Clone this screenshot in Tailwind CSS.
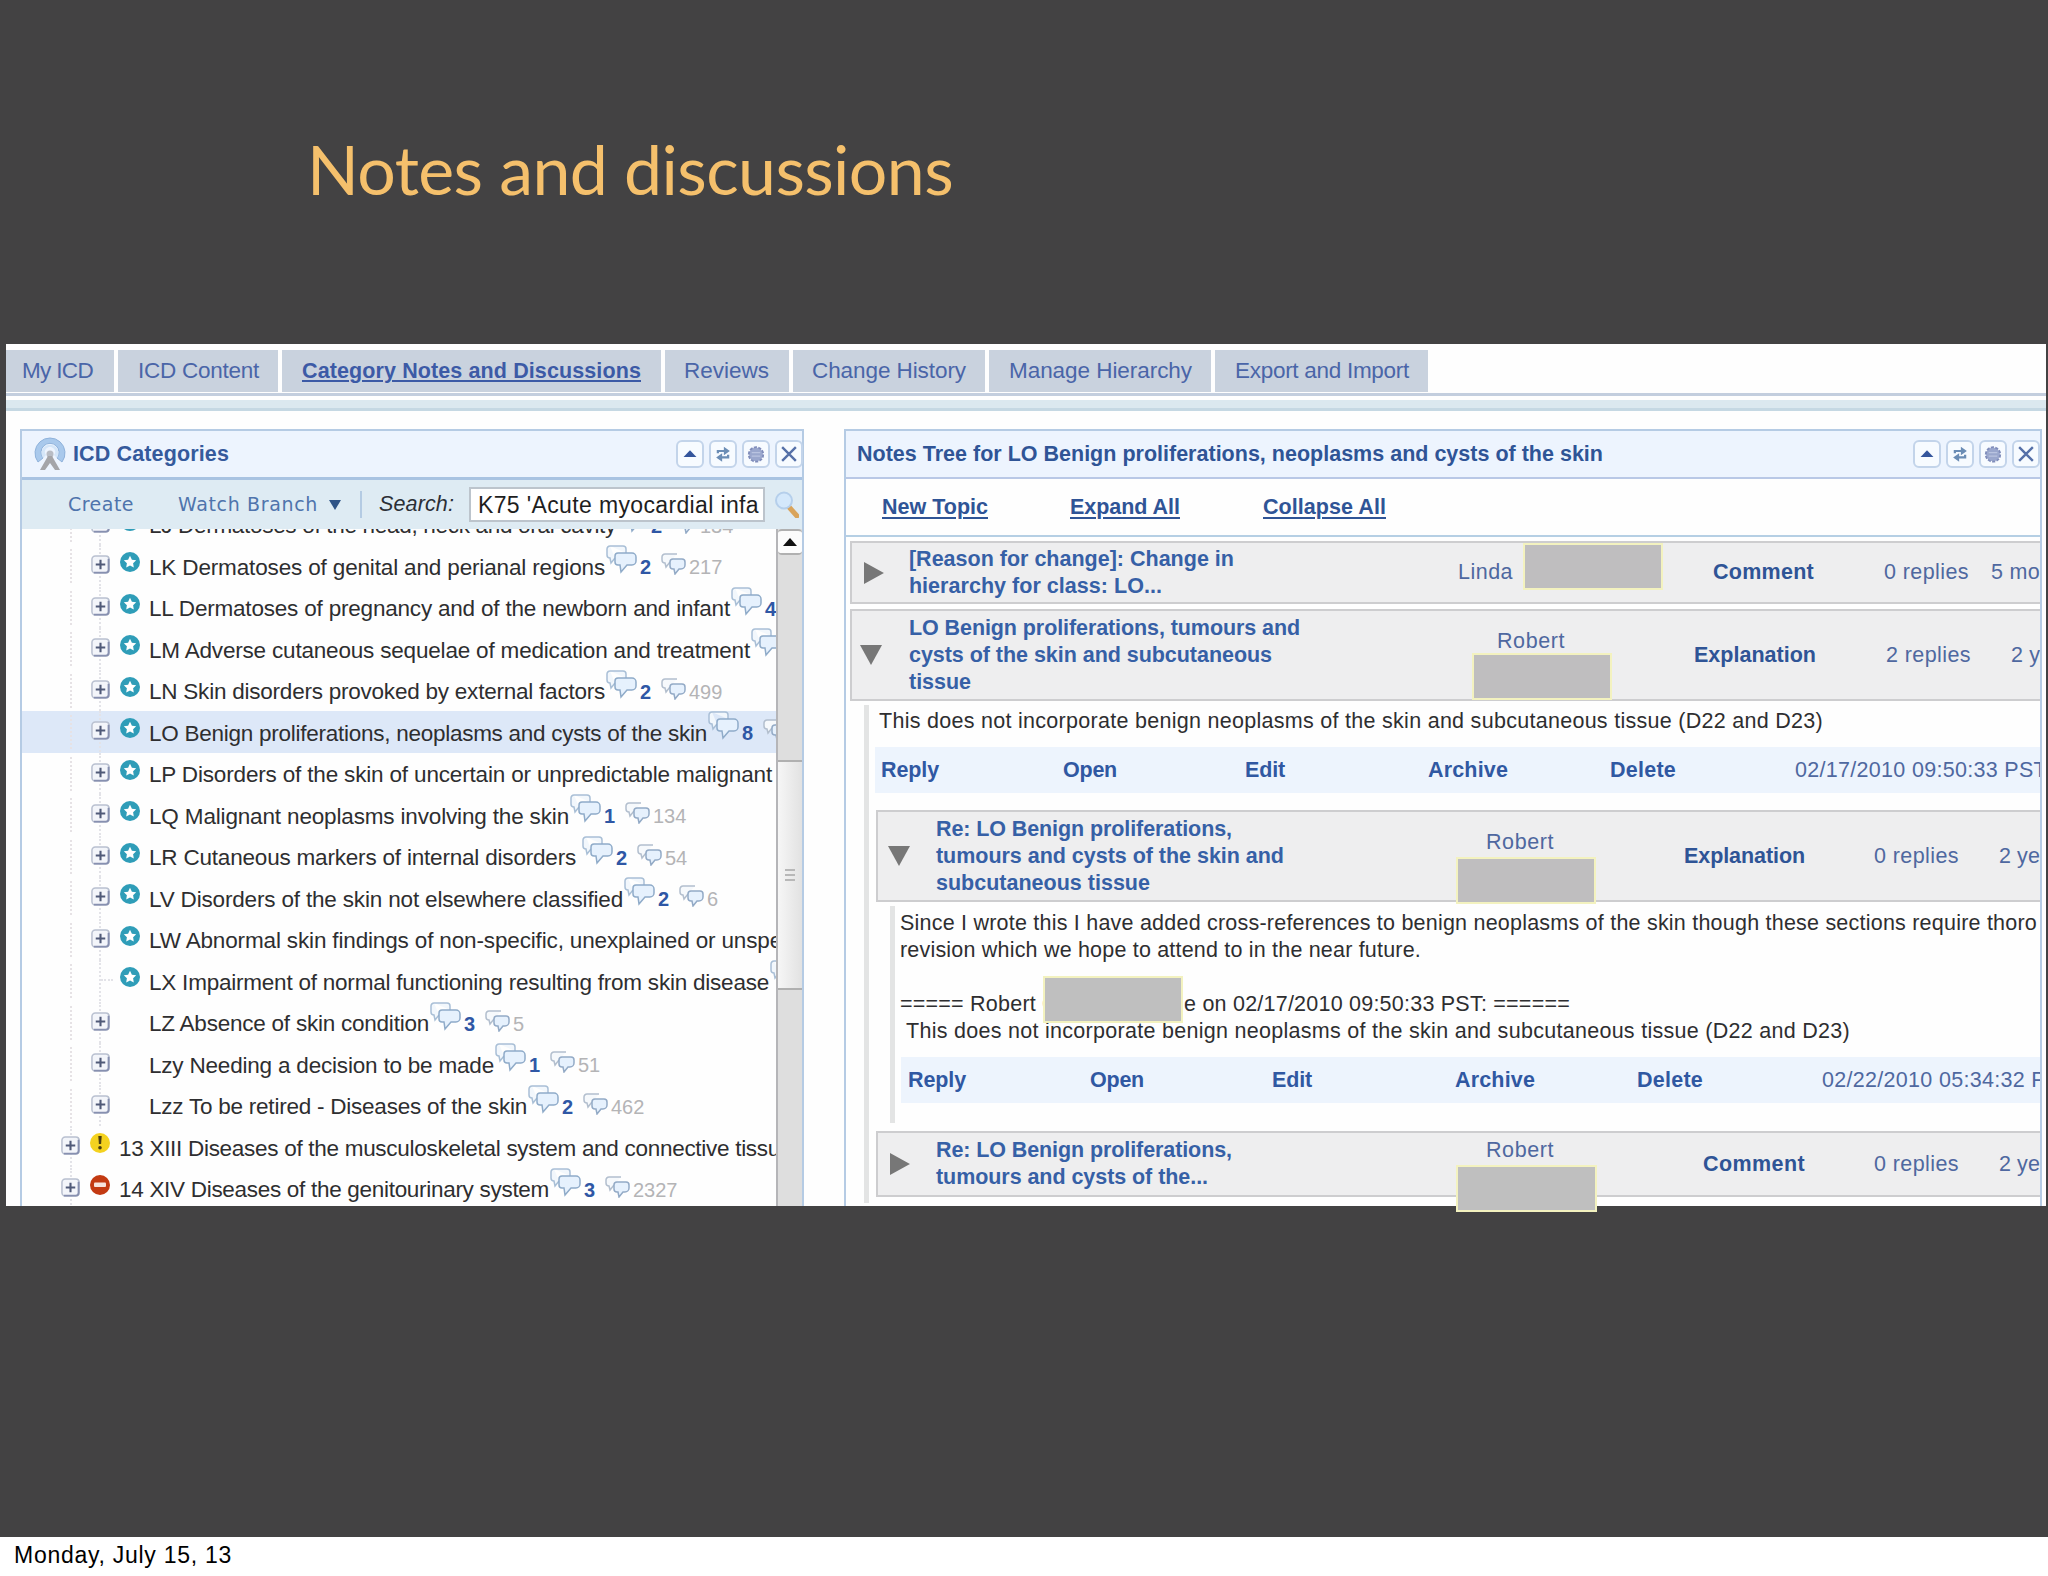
<!DOCTYPE html>
<html lang="en">
<head>
  <meta charset="UTF-8">
  <title>Notes and discussions</title>
  <script src="https://cdn.jsdelivr.net/npm/@tailwindcss/browser@4"></script>
</head>
<body class="w-[2048px] h-[1576px] overflow-hidden bg-white font-['Liberation_Sans',sans-serif]">
  <svg class="hidden">
    <symbol id="expander" viewBox="0 0 20 20">
      <rect x="1" y="1" width="18" height="18" rx="3.5" fill="#f3f5fa" stroke="#b9c0d0" stroke-width="1.6"/>
      <path d="M3 18.5h12.500a3 3 0 0 0 3-3V4" fill="none" stroke="#8790b0" stroke-width="2"/>
      <path d="M10 5v10M5 10h10" stroke="#505a78" stroke-width="2.200"/>
    </symbol>
    <symbol id="star" viewBox="0 0 20 20">
      <circle cx="10" cy="10" r="10" fill="#2f9db8"/>
      <path d="M10 3.800l1.900 3.900 4.300.6-3.100 3 .7 4.300L10 13.600l-3.800 2 .7-4.300-3.100-3 4.300-.6z" fill="#fff"/>
    </symbol>
    <symbol id="warn" viewBox="0 0 20 20">
      <circle cx="10" cy="10" r="10" fill="#f4d21f"/>
      <path d="M8.300 3h3.400l-.6 8H8.900z" fill="#4a3d10"/><circle cx="10" cy="14.700" r="1.800" fill="#4a3d10"/>
    </symbol>
    <symbol id="stop" viewBox="0 0 20 20">
      <circle cx="10" cy="10" r="10" fill="#c33a12"/><rect x="4" y="7.500" width="12" height="4.500" rx="1" fill="#f7e3dc"/>
    </symbol>
    <symbol id="bubbles" viewBox="0 0 31 29">
      <path d="M4 1h13a3 3 0 0 1 3 3v4M4 1a3 3 0 0 0-3 3v6a3 3 0 0 0 3 3l1 5 4-5" fill="#f2f7fc" stroke="#a9bfd6" stroke-width="1.500"/>
      <path d="M12 8h14a4 4 0 0 1 4 4v4a4 4 0 0 1-4 4h-5l-6 7-1-7h-2a3 3 0 0 1-3-3v-6a3 3 0 0 1 3-3z" fill="#e6f1fd" stroke="#8fabc9" stroke-width="1.500"/>
    </symbol>
    <symbol id="bubbles-sm" viewBox="0 0 25 22">
      <path d="M16 1H4a3 3 0 0 0-3 3v3a3 3 0 0 0 3 3l1 4 4-5" fill="#f6f9fc" stroke="#b3bfce" stroke-width="1.500"/>
      <path d="M12 6h9a3 3 0 0 1 3 3v3a4 4 0 0 1-4 4h-2l-4 5-1-5h-1a3 3 0 0 1-3-3V9a3 3 0 0 1 3-3z" fill="#e6f1fd" stroke="#93aac6" stroke-width="1.500"/>
    </symbol>
    <symbol id="btn-up" viewBox="0 0 28 28"><path d="M14 9.500l7.500 8h-15z" fill="#34559c"/></symbol>
    <symbol id="btn-refresh" viewBox="0 0 28 28">
      <path d="M8 13V10.500h8M20 15v3h-8" fill="none" stroke="#6b8db5" stroke-width="2.600"/>
      <path d="M15 5.500l7 5-7 5zM13 13l-7 5 7 5z" fill="#6b8db5"/>
    </symbol>
    <symbol id="btn-gear" viewBox="0 0 28 28">
      <circle cx="14" cy="14.500" r="8" fill="#a3afd2" stroke="#7f8cba" stroke-width="3" stroke-dasharray="3.500 1.500"/>
      <circle cx="14" cy="14.500" r="7.500" fill="#9aa7cd"/><path d="M9 12.500h10M9 16.500h10" stroke="#b9c3e0" stroke-width="1.500"/>
    </symbol>
    <symbol id="btn-close" viewBox="0 0 28 28"><path d="M6 6l16 16M22 6L6 22" stroke="#5570a8" stroke-width="2.800"/></symbol>
  </svg>

  <!-- slide -->
  <div class="relative h-[1537px] bg-[#434243] pl-1.5">
    <div class="h-[344px] pt-[119px] pl-[301px]">
      <h1 class="text-[68px] leading-[100px] text-[#f5c06c] font-['Lato',sans-serif]"><span data-w="646">Notes and discussions</span></h1>
    </div>

    <div class="w-[2040px] h-[862px] bg-[#fefefe] overflow-hidden pt-1.5">
      <!-- tabs -->
      <nav id="tabs" class="flex gap-1 h-[42px] text-[22.5px] text-[#4a65a8]"></nav>
      <div class="mt-[1px] h-[3px] bg-[#c3cede]"></div>
      <div class="mt-1 h-[11px] bg-[#dbe8ef] border-b-[3px] border-[#c5d8e3]"></div>

      <div class="flex mt-[18px]">
        <!-- category tree -->
        <section class="ml-3.5 w-[784px] h-[800px] border-2 border-[#b5cbe4]">
          <header class="flex items-center h-[46px] bg-[#edf4fe] pl-[11px]">
            <svg class="w-[34px] h-[34px]" viewBox="0 0 34 34">
              <path d="M5 25A15 15 0 1 1 29 25l-5-4a9 9 0 1 0-14 0z" fill="#a9c9ec" stroke="#8fb2db"/>
              <path d="M10 21a8.500 8.500 0 1 1 14 0l-3-3a5 5 0 1 0-8 0z" fill="#d5e6f8"/>
              <circle cx="17" cy="17" r="3.500" fill="#b8bcc4"/>
              <path d="M15 19h4l8 14h-5l-5-7-5 7H7z" fill="#a5a5a8"/>
            </svg>
            <h2 class="ml-[6px] pt-px text-[21.500px] font-bold text-[#355a9c]"><span data-w="156">ICD Categories</span></h2>
            <div class="panel-buttons ml-auto flex gap-[5px] -mr-px"></div>
          </header>
          <div class="flex items-center h-[52px] bg-[#deebf3] border-t-[3px] border-[#a9c3e2] text-[19px] text-[#4f74ac] font-['DejaVu_Sans',sans-serif]">
            <span class="ml-[46px]" data-w="66">Create</span>
            <span class="ml-[44px]" data-w="140">Watch Branch</span>
            <svg class="ml-[11px] w-3 h-2.5" viewBox="0 0 12 10"><path d="M0 0h12L6 10z" fill="#2f5487"/></svg>
            <div class="ml-[19px] w-0.5 h-[27px] bg-[#b4cbe3]"></div>
            <span class="ml-[17px] italic text-[21.500px] text-[#2b2f36] font-['Liberation_Sans',sans-serif]" data-w="75">Search:</span>
            <div class="ml-[15px] w-[296px] h-[35px] bg-white border-2 border-[#bcc4cc] pl-[7px] text-[23px] leading-[33px] text-[#1e1e1e] font-['Liberation_Sans',sans-serif] overflow-hidden"><span data-w="281">K75 'Acute myocardial infa</span></div>
            <svg class="ml-[10px] w-6 h-[27px]" viewBox="0 0 24 27">
              <path d="M14 16l8 9" stroke="#d9a45b" stroke-width="5" stroke-linecap="round"/>
              <circle cx="9" cy="9.500" r="8" fill="#d4e8fb" stroke="#b5cfeb" stroke-width="2"/>
            </svg>
          </div>
          <div class="flex h-[680px]">
            <div class="w-[754px] h-full overflow-hidden">
              <ul id="tree" class="-mt-[25.500px] text-[22.500px] text-[#2e2e30] leading-[41.500px]"></ul>
            </div>
            <!-- scrollbar -->
            <div class="w-[26px] border-l-2 border-[#b5b5b8] bg-[#dedede]">
              <div class="flex items-center justify-center h-[26px] bg-[#fcfcfc] border-y-2 border-[#b0b0b0] rounded-sm">
                <svg class="w-3.5 h-2" viewBox="0 0 14 8"><path d="M7 0l7 8H0z" fill="#111"/></svg>
              </div>
              <div class="h-[205px]"></div>
              <div class="flex flex-col items-center justify-center gap-[3px] h-[230px] bg-gradient-to-r from-[#f6f6f6] to-[#e2e2e2] border-y-2 border-[#b0b0b0]">
                <div class="w-2.5 h-0.5 bg-[#b8b8b8]"></div>
                <div class="w-2.5 h-0.5 bg-[#b8b8b8]"></div>
                <div class="w-2.5 h-0.5 bg-[#b8b8b8]"></div>
              </div>
            </div>
          </div>
        </section>

        <!-- notes -->
        <section class="ml-10 w-[1198px] h-[800px] border-2 border-[#b5cbe4] overflow-hidden text-[21.500px] text-[#4f68a0] leading-[27px]">
          <header class="flex items-center h-[48px] bg-[#edf4fe] border-b-2 border-[#b9c8e6] pl-[11px]">
            <h2 class="font-bold text-[#2f5496]"><span data-w="746">Notes Tree for LO Benign proliferations, neoplasms and cysts of the skin</span></h2>
            <div class="panel-buttons ml-auto flex gap-[5px]"></div>
          </header>
          <div class="flex items-center h-[58px] border-b-2 border-[#b5cfe4] pl-9 font-bold underline text-[#2f5496] decoration-2 underline-offset-[3px]">
            <span data-w="106">New Topic</span>
            <span class="ml-[82px]" data-w="110">Expand All</span>
            <span class="ml-[83px]" data-w="123">Collapse All</span>
          </div>

          <div class="pl-1 pt-[4px]">
            <div class="relative flex items-center h-[63px] bg-[#eeeeef] border-2 border-r-0 border-[#cdcdcf]">
              <svg class="ml-3 w-5 h-[22px]" viewBox="0 0 20 22"><path d="M0 0l20 11L0 22z" fill="#777"/></svg>
              <div class="ml-[25px] w-[551px] font-bold text-[#3660a6]">
                <div><span data-w="325">[Reason for change]: Change in</span></div>
                <div><span data-w="253">hierarchy for class: LO...</span></div>
              </div>
              <span data-w="55">Linda</span>
              <span class="ml-[200px] font-bold text-[#2f5496]" data-w="101">Comment</span>
              <span class="ml-[70px]" data-w="85">0 replies</span>
              <span class="ml-[22px]" data-w="49">5 mo</span>
              <div class="absolute left-[671px] top-0 w-[140px] h-[47px] bg-[#bfbebf] border-2 border-[#f3f2bf]"></div>
            </div>

            <div class="relative flex items-center mt-[5px] h-[92px] bg-[#eeeeef] border-2 border-r-0 border-[#cdcdcf]">
              <svg class="ml-2 w-[22px] h-5" viewBox="0 0 22 20"><path d="M0 0h22L11 20z" fill="#777"/></svg>
              <div class="ml-[27px] w-[561px] font-bold text-[#3660a6]">
                <div><span data-w="391">LO Benign proliferations, tumours and</span></div>
                <div><span data-w="363">cysts of the skin and subcutaneous</span></div>
                <div><span data-w="62">tissue</span></div>
              </div>
              <div class="w-[120px] pl-[27px] -mt-7"><span data-w="68">Robert</span></div>
              <span class="ml-[104px] font-bold text-[#2f5496]" data-w="122">Explanation</span>
              <span class="ml-[70px]" data-w="85">2 replies</span>
              <span class="ml-[40px]" data-w="29">2 y</span>
              <div class="absolute left-[620px] top-[42px] w-[140px] h-[47px] bg-[#bfbebf] border-2 border-[#f3f2bf]"></div>
            </div>

            <div class="mt-1 ml-3.5 h-[498px] border-l-[5px] border-[#e3e4e4] text-[#2e2e30]">
              <p class="pl-[10px] pt-[3px] h-[42px]"><span data-w="944">This does not incorporate benign neoplasms of the skin and subcutaneous tissue (D22 and D23)</span></p>
              <div class="flex items-center ml-1.5 pl-[6px] h-[46px] bg-[#edf4fd] font-bold text-[#3058a2]">
                <span data-w="58">Reply</span>
                <span class="ml-[124px]" data-w="54">Open</span>
                <span class="ml-[128px]" data-w="40">Edit</span>
                <span class="ml-[143px]" data-w="80">Archive</span>
                <span class="ml-[102px]" data-w="66">Delete</span>
                <span class="ml-[119px] font-normal text-[#4f68a0]" data-w="252">02/17/2010 09:50:33 PST</span>
              </div>

              <div class="ml-[7px] mt-[17px]">
                <div class="relative flex items-center h-[92px] bg-[#eeeeef] border-2 border-r-0 border-[#cdcdcf] text-[#4f68a0]">
                  <svg class="ml-[10px] w-[22px] h-5" viewBox="0 0 22 20"><path d="M0 0h22L11 20z" fill="#777"/></svg>
                  <div class="ml-[26px] w-[551px] font-bold text-[#3660a6]">
                    <div><span data-w="296">Re: LO Benign proliferations,</span></div>
                    <div><span data-w="348">tumours and cysts of the skin and</span></div>
                    <div><span data-w="214">subcutaneous tissue</span></div>
                  </div>
                  <span class="-mt-7" data-w="68">Robert</span>
                  <span class="ml-[130px] font-bold text-[#2f5496]" data-w="121">Explanation</span>
                  <span class="ml-[69px]" data-w="85">0 replies</span>
                  <span class="ml-[40px]" data-w="41">2 ye</span>
                  <div class="absolute left-[578px] top-[45px] w-[140px] h-[47px] bg-[#bfbebf] border-2 border-[#f3f2bf]"></div>
                </div>

                <div class="relative mt-1 ml-3.5 h-[217px] border-l-[5px] border-[#e3e4e4]">
                  <div class="pl-[5px] pt-[4px] h-[151px] whitespace-nowrap">
                    <p><span data-w="1137">Since I wrote this I have added cross-references to benign neoplasms of the skin though these sections require thoro</span></p>
                    <p><span data-w="521">revision which we hope to attend to in the near future.</span></p>
                    <p class="h-[27px]"></p>
                    <p class="flex"><span data-w="136">===== Robert</span><span class="ml-[6px]" data-w="16">C</span><span class="ml-[126px]" data-w="386">e on 02/17/2010 09:50:33 PST: ======</span></p>
                    <p class="pl-1.5"><span data-w="944">This does not incorporate benign neoplasms of the skin and subcutaneous tissue (D22 and D23)</span></p>
                  </div>
                  <div class="flex items-center ml-1.5 pl-[7px] h-[46px] bg-[#edf4fd] font-bold text-[#3058a2]">
                    <span data-w="58">Reply</span>
                    <span class="ml-[124px]" data-w="54">Open</span>
                    <span class="ml-[128px]" data-w="40">Edit</span>
                    <span class="ml-[143px]" data-w="80">Archive</span>
                    <span class="ml-[102px]" data-w="66">Delete</span>
                    <span class="ml-[119px] font-normal text-[#4f68a0]" data-w="252">02/22/2010 05:34:32 PST</span>
                  </div>
                  <div class="absolute left-[148px] top-[70px] w-[140px] h-[47px] bg-[#bfbfbf] border-2 border-[#f3f2bf]"></div>
                </div>

                <div class="flex items-center mt-2 h-[66px] bg-[#eeeeef] border-2 border-r-0 border-[#cdcdcf] text-[#4f68a0]">
                  <svg class="ml-3 w-5 h-[22px]" viewBox="0 0 20 22"><path d="M0 0l20 11L0 22z" fill="#777"/></svg>
                  <div class="ml-[26px] w-[551px] font-bold text-[#3660a6]">
                    <div><span data-w="296">Re: LO Benign proliferations,</span></div>
                    <div><span data-w="272">tumours and cysts of the...</span></div>
                  </div>
                  <span class="-mt-7" data-w="68">Robert</span>
                  <span class="ml-[149px] font-bold text-[#2f5496]" data-w="102">Comment</span>
                  <span class="ml-[69px]" data-w="85">0 replies</span>
                  <span class="ml-[40px]" data-w="41">2 ye</span>
                </div>
              </div>
            </div>
          </div>
        </section>
      </div>
    </div>
    <!-- hangs over the lower edge of the window -->
    <div class="absolute left-[1456px] top-[1165px] w-[141px] h-[47px] bg-[#bfbfbf] border-2 border-[#f3f2bf]"></div>
  </div>

  <footer class="pl-3.5 text-[23px] leading-[36px] text-black"><span data-w="218">Monday, July 15, 13</span></footer>

  <script>
    const tabs = [
      ['My ICD', 108, 17, 71],
      ['ICD Content', 160, 20, 121],
      ['Category Notes and Discussions', 379, 20, 339],
      ['Reviews', 124, 19, 85],
      ['Change History', 192, 19, 154],
      ['Manage Hierarchy', 222, 20, 183],
      ['Export and Import', 213, 20, 174],
    ];
    document.getElementById('tabs').innerHTML = tabs.map(([label, width, pad, w], i) => `
      <div class="flex items-center bg-[#c9d2de]" style="width:${width}px;padding-left:${pad - (i ? 0 : 1)}px">
        <span class="${i === 2 ? 'font-bold underline decoration-2 underline-offset-2 text-[#3c5aa6] text-[21.500px]' : ''}" data-w="${w}">${label}</span>
      </div>`).join('');

    // label, width, icon, notes, notes below
    const categories = [
      ['LJ Dermatoses of the head, neck and oral cavity', 467, 'star', 2, 134],
      ['LK Dermatoses of genital and perianal regions', 456, 'star', 2, 217],
      ['LL Dermatoses of pregnancy and of the newborn and infant', 581, 'star', 4, ''],
      ['LM Adverse cutaneous sequelae of medication and treatment', 601, 'star', ' ', ''],
      ['LN Skin disorders provoked by external factors', 456, 'star', 2, 499],
      ['LO Benign proliferations, neoplasms and cysts of the skin', 558, 'star', 8, ''],
      ['LP Disorders of the skin of uncertain or unpredictable malignant', 623, 'star'],
      ['LQ Malignant neoplasms involving the skin', 420, 'star', 1, 134],
      ['LR Cutaneous markers of internal disorders', 427, 'star', 2, 54, 6],
      ['LV Disorders of the skin not elsewhere classified', 474, 'star', 2, 6],
      ['LW Abnormal skin findings of non-specific, unexplained or unspe', 633, 'star'],
      ['LX Impairment of normal functioning resulting from skin disease', 620, 'star', ' ', ''],
      ['LZ Absence of skin condition', 280, '', 3, 5],
      ['Lzy Needing a decision to be made', 345, '', 1, 51],
      ['Lzz To be retired - Diseases of the skin', 378, '', 2, 462],
      ['13 XIII Diseases of the musculoskeletal system and connective tissu', 661, 'warn'],
      ['14 XIV Diseases of the genitourinary system', 430, 'stop', 3, 2327],
    ];
    document.getElementById('tree').innerHTML = categories.map(([label, w, icon, notes, below, gap], i) => {
      const top = i > 14;
      const leaf = label.startsWith('LX');
      return `
      <li class="relative flex h-[41.500px] whitespace-nowrap ${top ? 'pl-[39px]' : 'pl-[69px]'} ${label.startsWith('LO') ? 'bg-[#dde8f8]' : ''}">
        ${top ? '' : '<i class="absolute left-[48px] top-1 h-[34px] border-l-2 border-dotted border-[#e6e2e5]"></i>'}
        <i class="absolute ${top ? 'left-[48px]' : 'left-[77px]'} top-0 h-[41px] border-l-2 border-dotted border-[#e3e3e8]"></i>
        ${leaf ? '<i class="absolute left-[79px] top-[19px] w-3 border-t-2 border-dotted border-[#e3e3e8]"></i>' : ''}
        <svg class="relative shrink-0 mt-[10px] w-[19px] h-[19px]">${leaf ? '' : '<use href="#expander"/>'}</svg>
        <svg class="shrink-0 ml-2.5 mt-[7px] w-5 h-5">${icon ? `<use href="#${icon}"/>` : ''}</svg>
        <span class="shrink-0 ml-[9px] pt-[1.500px]" data-w="${w}">${label}</span>
        ${notes ? `
        <svg class="shrink-0 ${gap ? 'ml-1.5' : 'ml-px'} w-[31px] h-[29px]"><use href="#bubbles"/></svg>
        <b class="shrink-0 ml-[3px] pt-0.5 w-[11px] text-xl leading-[41.500px] text-[#2f57a5]">${notes}</b>
        <svg class="shrink-0 ml-[10px] mt-2 w-[25px] h-[22px]"><use href="#bubbles-sm"/></svg>
        <span class="ml-[3px] pt-0.5 text-xl leading-[41.500px] text-[#b4b4b6]">${below}</span>` : ''}
      </li>`;
    }).join('');

    document.querySelectorAll('.panel-buttons').forEach(el => {
      el.innerHTML = ['up', 'refresh', 'gear', 'close'].map(name => `
        <svg class="w-7 h-7 rounded-md border-2 border-[#c3d4ea] bg-[#f7fbff]" viewBox="0 0 28 28"><use href="#btn-${name}"/></svg>`).join('');
    });

    // spread each label over its width in px
    function fitLabels() {
      document.querySelectorAll('[data-w]').forEach(el => {
        const w = Number(el.dataset.w);
        el.style.display = 'inline-block';
        el.style.whiteSpace = 'nowrap';
        el.style.flexShrink = 0;
        el.style.letterSpacing = '0px';
        el.style.width = 'max-content';
        const natural = el.getBoundingClientRect().width;
        el.style.letterSpacing = (w - natural) / el.textContent.length + 'px';
        el.style.width = w + 'px';
      });
    }

    // the stylesheet can arrive after the markup, so fit again when sizes change
    fitLabels();
    window.addEventListener('load', fitLabels);
    document.fonts.ready.then(fitLabels);
    new ResizeObserver(fitLabels).observe(document.body);
  </script>
</body>
</html>
